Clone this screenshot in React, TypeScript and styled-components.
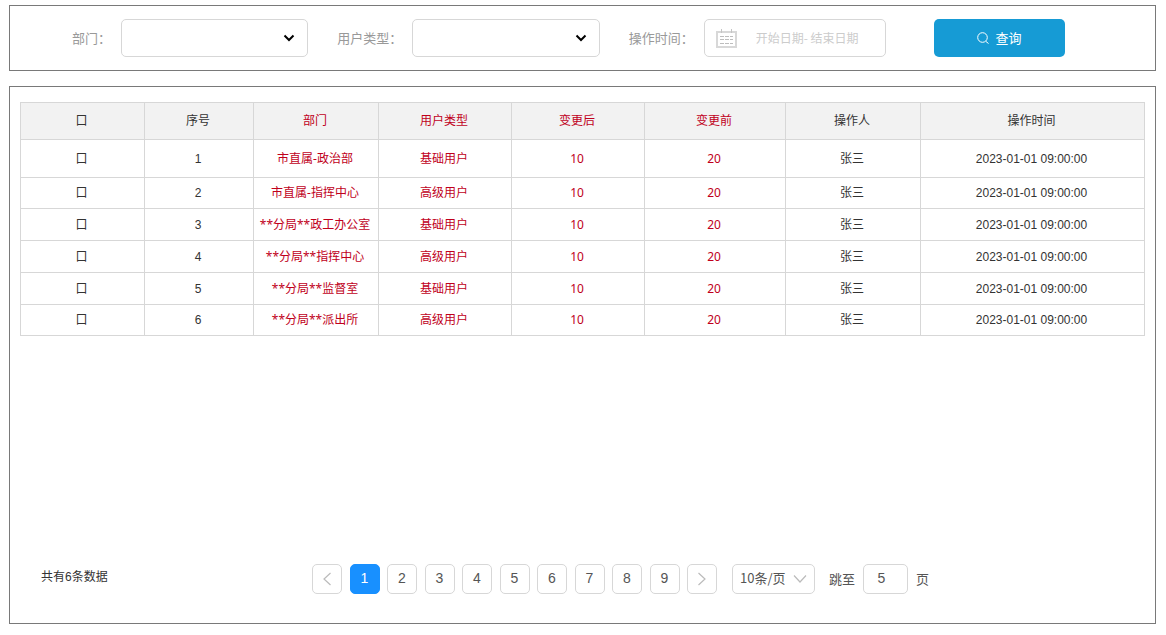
import React from 'react';
import styled, { createGlobalStyle, css } from 'styled-components';

const latin = '"Liberation Sans", "Noto Sans CJK SC", sans-serif';
const chinese = '"Noto Sans CJK SC", sans-serif';
const humanist = '"Noto Sans", "Noto Sans CJK SC", sans-serif';

const GlobalStyle = createGlobalStyle`
  *, *::before, *::after { box-sizing: border-box; }
  body { margin: 0; background: #fff; color: #333; font: 12px/20px ${latin}; }
  button, input, select { font: inherit; color: inherit; margin: 0; }
`;

const Page = styled.main`
  display: flex;
  flex-direction: column;
  gap: 15px;
  min-height: 100vh;
  padding: 5px 10px 11px 9px;
`;

const Panel = styled.section`
  border: 1px solid #797979;
  background: #fff;
`;

const FilterBar = styled(Panel).attrs({ as: 'form' })`
  display: flex;
  align-items: center;
  gap: 29px;
  padding: 13px 90px 13px 62px;
`;

const Field = styled.div<{ $basis: number }>`
  display: flex;
  align-items: center;
  gap: 10px;
  flex: 1 1 ${(p) => p.$basis}px;
`;

const FieldLabel = styled.label`
  flex: none;
  color: #999;
  font: 13px/20px ${chinese};
`;

const Control = styled.div`
  position: relative;
  display: flex;
  flex: 1;
  min-width: 0;
`;

const outlined = css`
  border: 1px solid #d7d7d7;
  border-radius: 5px;
  background: #fff;
`;

const FilterSelect = styled.select`
  ${outlined}
  appearance: none;
  width: 100%;
  height: 38px;
  padding: 0 32px 0 10px;
`;

const DateInput = styled.input`
  ${outlined}
  width: 100%;
  height: 38px;
  padding: 0 8px 2px 51px;
  font-family: ${chinese};
  &::placeholder { color: #ccc; opacity: 1; }
`;

const Overlay = styled.svg<{ $side: 'left' | 'right'; $inset: number }>`
  position: absolute;
  top: 0;
  bottom: 0;
  ${(p) => p.$side}: ${(p) => p.$inset}px;
  margin: auto 0;
  fill: none;
  pointer-events: none;
`;

const SearchButton = styled.button`
  display: flex;
  align-items: center;
  justify-content: center;
  gap: 6px;
  flex: none;
  width: 131px;
  height: 38px;
  margin-left: 19px;
  border: 0;
  border-radius: 5px;
  background: #169bd5;
  color: #fff;
  font: 13px/20px ${chinese};
`;

const ResultPanel = styled(Panel)`
  display: flex;
  flex: 1;
  flex-direction: column;
  justify-content: space-between;
  gap: 30px;
  padding: 15px 10px 29px;
`;

const Table = styled.table`
  width: 100%;
  table-layout: fixed;
  border-collapse: collapse;
  text-align: center;
`;

const HeadRow = styled.tr`
  height: 37px;
  background: #f2f2f2;
`;

const BodyRow = styled.tr`
  height: 32px;
  &:first-child { height: 38px; }
  &:nth-child(2), &:last-child { height: 31px; }
`;

const cell = css<{ $changed?: boolean }>`
  padding: 0 2px 0 0;
  border: 1px solid #d7d7d7;
  font-weight: 400;
  white-space: nowrap;
  ${(p) => p.$changed && css`
    color: #c0001b;
    font-family: ${humanist};
  `}
`;

const HeadCell = styled.th<{ $changed?: boolean }>`${cell}`;
const Cell = styled.td<{ $changed?: boolean }>`${cell}`;

const Tick = styled.label`
  position: relative;
  cursor: pointer;
  input {
    position: absolute;
    inset: 0;
    width: 100%;
    height: 100%;
    opacity: 0;
  }
`;

const Footer = styled.footer`
  display: flex;
  align-items: center;
  color: #555;
  font-size: 14px;
`;

const Total = styled.p`
  width: 292px;
  margin: 0;
  padding: 0 0 4px 21px;
  color: #333;
  font-size: 12px;
`;

const Pages = styled.nav`
  display: flex;
  justify-content: space-between;
  width: 405px;
`;

const PageButton = styled.button<{ $active?: boolean }>`
  ${outlined}
  display: flex;
  align-items: center;
  justify-content: center;
  width: 30px;
  height: 30px;
  padding: 0 0 2px;
  ${(p) => p.$active && css`
    border-color: #1890ff;
    background: #1890ff;
    color: #fff;
  `}
`;

const ArrowButton = styled(PageButton)`
  padding: 0;
`;

const SizeControl = styled.div`
  position: relative;
  width: 83px;
  margin-left: 15px;
`;

const SizeSelect = styled.select`
  ${outlined}
  appearance: none;
  display: block;
  width: 100%;
  height: 30px;
  padding: 0 0 2px 7px;
  font: 13px/20px ${chinese};
`;

const Jump = styled.label`
  display: flex;
  align-items: center;
  gap: 8px;
  margin-left: 14px;
  font: 13px/20px ${chinese};
`;

const JumpInput = styled.input`
  ${outlined}
  width: 45px;
  height: 30px;
  padding: 0 8px 2px 0;
  font: 14px/20px ${latin};
  text-align: center;
`;

function SelectArrow() {
  return (
    <Overlay $side="right" $inset={13} width="12" height="8" viewBox="0 0 12 8" aria-hidden="true">
      <path d="M1.5 1.5 6 6l4.500-4.500" stroke="#000" strokeWidth="2" />
    </Overlay>
  );
}

function Arrow({ d }: { d: string }) {
  return (
    <svg width="10" height="14" viewBox="0 0 10 14" fill="none" aria-hidden="true">
      <path d={d} stroke="#bbb" strokeWidth="1.200" />
    </svg>
  );
}

const columns = [
  { title: '口', width: 124 },
  { title: '序号', width: 109 },
  { title: '部门', width: 125, changed: true },
  { title: '用户类型', width: 133, changed: true },
  { title: '变更后', width: 133, changed: true },
  { title: '变更前', width: 141, changed: true },
  { title: '操作人', width: 135 },
  { title: '操作时间', width: 224 },
];

const records = [
  ['市直属-政治部', '基础用户'],
  ['市直属-指挥中心', '高级用户'],
  ['**分局**政工办公室', '基础用户'],
  ['**分局**指挥中心', '高级用户'],
  ['**分局**监督室', '基础用户'],
  ['**分局**派出所', '高级用户'],
];

export default function App() {
  return (
    <>
      <GlobalStyle />
      <Page>
        <FilterBar>
          <Field $basis={236}>
            <FieldLabel htmlFor="dept">部门：</FieldLabel>
            <Control>
              <FilterSelect id="dept"><option value="" /></FilterSelect>
              <SelectArrow />
            </Control>
          </Field>
          <Field $basis={262}>
            <FieldLabel htmlFor="type">用户类型：</FieldLabel>
            <Control>
              <FilterSelect id="type"><option value="" /></FilterSelect>
              <SelectArrow />
            </Control>
          </Field>
          <Field $basis={257}>
            <FieldLabel htmlFor="period">操作时间：</FieldLabel>
            <Control>
              <DateInput id="period" placeholder="开始日期- 结束日期" />
              <Overlay $side="left" $inset={12} width="21" height="19" viewBox="0 0 21 19" aria-hidden="true">
                <path d="M1 3h19v15H1z" stroke="#d8d8d8" strokeWidth="2" />
                <path d="M5.500 0v4M15.500 0v4" stroke="#c4c4c4" />
                <path d="M4 7.500h13M4 10.500h13M4 14.500h13" stroke="#bdbdbd" strokeDasharray="4 1" />
              </Overlay>
            </Control>
          </Field>
          <SearchButton type="button">
            <svg width="12" height="12" viewBox="0 0 12 12" fill="none" stroke="#fff" aria-hidden="true">
              <circle cx="5.500" cy="5.500" r="4.800" />
              <path d="m9 9.500 2.500 2" />
            </svg>
            查询
          </SearchButton>
        </FilterBar>

        <ResultPanel>
          <Table>
            <colgroup>
              {columns.map((c) => <col key={c.title} width={c.width} />)}
            </colgroup>
            <thead>
              <HeadRow>
                {columns.map((c, i) => (
                  <HeadCell key={c.title} $changed={c.changed} scope="col">
                    {i === 0 ? <Tick><input type="checkbox" aria-label="全选" />口</Tick> : c.title}
                  </HeadCell>
                ))}
              </HeadRow>
            </thead>
            <tbody>
              {records.map(([dept, type], i) => (
                <BodyRow key={dept}>
                  <Cell><Tick><input type="checkbox" aria-label={dept} />口</Tick></Cell>
                  <Cell>{i + 1}</Cell>
                  <Cell $changed>{dept}</Cell>
                  <Cell $changed>{type}</Cell>
                  <Cell $changed>10</Cell>
                  <Cell $changed>20</Cell>
                  <Cell>张三</Cell>
                  <Cell>2023-01-01 09:00:00</Cell>
                </BodyRow>
              ))}
            </tbody>
          </Table>

          <Footer>
            <Total>共有6条数据</Total>
            <Pages aria-label="分页">
              <ArrowButton type="button" aria-label="上一页"><Arrow d="M8.500 1 2 7l6.500 6" /></ArrowButton>
              {[1, 2, 3, 4, 5, 6, 7, 8, 9].map((n) => (
                <PageButton key={n} type="button" $active={n === 1}>{n}</PageButton>
              ))}
              <ArrowButton type="button" aria-label="下一页"><Arrow d="m1.500 1 6.500 6-6.500 6" /></ArrowButton>
            </Pages>
            <SizeControl>
              <SizeSelect aria-label="每页条数"><option>10条/页</option></SizeSelect>
              <Overlay $side="right" $inset={8} width="14" height="10" viewBox="0 0 14 10" aria-hidden="true">
                <path d="m1 1.500 6 6.500 6-6.500" stroke="#bbb" strokeWidth="1.200" />
              </Overlay>
            </SizeControl>
            <Jump>
              跳至
              <JumpInput defaultValue="5" />
              页
            </Jump>
          </Footer>
        </ResultPanel>
      </Page>
    </>
  );
}
